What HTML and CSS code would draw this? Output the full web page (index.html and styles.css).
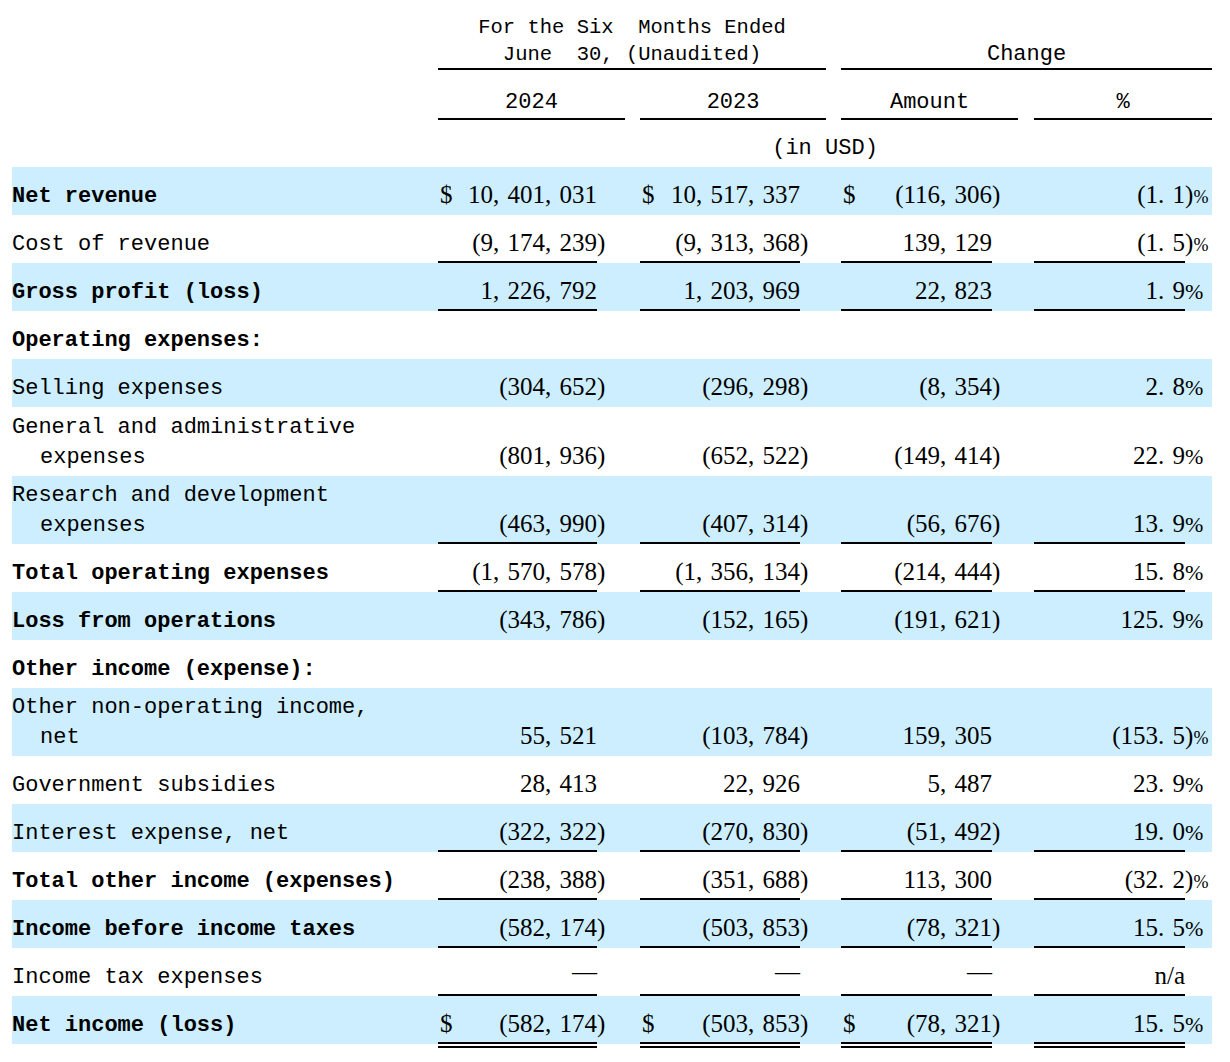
FILE: index.html
```html
<!DOCTYPE html>
<html lang="en">
<head>
<meta charset="utf-8">
<title>Six Months Ended June 30 - Results of Operations</title>
<link rel="stylesheet" href="styles.css">
</head>
<body>
<div class="wrap">
<table class="fin">
  <colgroup>
    <col class="c-lbl"><col class="c-va"><col class="c-sa"><col class="c-g1">
    <col class="c-vb"><col class="c-sb"><col class="c-g2">
    <col class="c-vc"><col class="c-sc"><col class="c-g3">
    <col class="c-vd"><col class="c-sd">
  </colgroup>
  <thead>
    <tr class="h1">
      <th class="hl"></th>
      <th class="hc hu hsm" colspan="5">For the Six&nbsp; Months Ended<br>June&nbsp; 30, (Unaudited)</th>
      <th></th>
      <th class="hc hu" colspan="5">Change</th>
    </tr>
    <tr class="h2">
      <th class="hl"></th>
      <th class="hc hu" colspan="2">2024</th>
      <th></th>
      <th class="hc hu" colspan="2">2023</th>
      <th></th>
      <th class="hc hu" colspan="2">Amount</th>
      <th></th>
      <th class="hc hu" colspan="2">%</th>
    </tr>
    <tr class="h3">
      <th class="hl"></th>
      <th class="hc" colspan="11">(in USD)</th>
    </tr>
  </thead>
  <tbody>
    <tr class="blue">
      <td class="lbl b">Net revenue</td>
      <td class="v"><span class="cur">$</span>10, 401, 031</td><td class="s"></td><td></td>
      <td class="v"><span class="cur">$</span>10, 517, 337</td><td class="s"></td><td></td>
      <td class="v"><span class="cur">$</span>(116, 306</td><td class="s">)</td><td></td>
      <td class="v">(1. 1</td><td class="s">)<span class="pc sm">%</span></td>
    </tr>
    <tr>
      <td class="lbl">Cost of revenue</td>
      <td class="v u">(9, 174, 239</td><td class="s">)</td><td></td>
      <td class="v u">(9, 313, 368</td><td class="s">)</td><td></td>
      <td class="v u">139, 129</td><td class="s"></td><td></td>
      <td class="v u">(1. 5</td><td class="s">)<span class="pc sm">%</span></td>
    </tr>
    <tr class="blue">
      <td class="lbl b">Gross profit (loss)</td>
      <td class="v u">1, 226, 792</td><td class="s"></td><td></td>
      <td class="v u">1, 203, 969</td><td class="s"></td><td></td>
      <td class="v u">22, 823</td><td class="s"></td><td></td>
      <td class="v u">1. 9</td><td class="s"><span class="pc">%</span></td>
    </tr>
    <tr>
      <td class="lbl b">Operating expenses:</td>
      <td></td><td></td><td></td><td></td><td></td><td></td><td></td><td></td><td></td><td></td><td></td>
    </tr>
    <tr class="blue">
      <td class="lbl">Selling expenses</td>
      <td class="v">(304, 652</td><td class="s">)</td><td></td>
      <td class="v">(296, 298</td><td class="s">)</td><td></td>
      <td class="v">(8, 354</td><td class="s">)</td><td></td>
      <td class="v">2. 8</td><td class="s"><span class="pc">%</span></td>
    </tr>
    <tr class="tall">
      <td class="lbl">General and administrative<br>expenses</td>
      <td class="v">(801, 936</td><td class="s">)</td><td></td>
      <td class="v">(652, 522</td><td class="s">)</td><td></td>
      <td class="v">(149, 414</td><td class="s">)</td><td></td>
      <td class="v">22. 9</td><td class="s"><span class="pc">%</span></td>
    </tr>
    <tr class="blue">
      <td class="lbl">Research and development<br>expenses</td>
      <td class="v u">(463, 990</td><td class="s">)</td><td></td>
      <td class="v u">(407, 314</td><td class="s">)</td><td></td>
      <td class="v u">(56, 676</td><td class="s">)</td><td></td>
      <td class="v u">13. 9</td><td class="s"><span class="pc">%</span></td>
    </tr>
    <tr>
      <td class="lbl b">Total operating expenses</td>
      <td class="v u">(1, 570, 578</td><td class="s">)</td><td></td>
      <td class="v u">(1, 356, 134</td><td class="s">)</td><td></td>
      <td class="v u">(214, 444</td><td class="s">)</td><td></td>
      <td class="v u">15. 8</td><td class="s"><span class="pc">%</span></td>
    </tr>
    <tr class="blue">
      <td class="lbl b">Loss from operations</td>
      <td class="v">(343, 786</td><td class="s">)</td><td></td>
      <td class="v">(152, 165</td><td class="s">)</td><td></td>
      <td class="v">(191, 621</td><td class="s">)</td><td></td>
      <td class="v">125. 9</td><td class="s"><span class="pc">%</span></td>
    </tr>
    <tr>
      <td class="lbl b">Other income (expense):</td>
      <td></td><td></td><td></td><td></td><td></td><td></td><td></td><td></td><td></td><td></td><td></td>
    </tr>
    <tr class="blue">
      <td class="lbl">Other non-operating income,<br>net</td>
      <td class="v">55, 521</td><td class="s"></td><td></td>
      <td class="v">(103, 784</td><td class="s">)</td><td></td>
      <td class="v">159, 305</td><td class="s"></td><td></td>
      <td class="v">(153. 5</td><td class="s">)<span class="pc sm">%</span></td>
    </tr>
    <tr>
      <td class="lbl">Government subsidies</td>
      <td class="v">28, 413</td><td class="s"></td><td></td>
      <td class="v">22, 926</td><td class="s"></td><td></td>
      <td class="v">5, 487</td><td class="s"></td><td></td>
      <td class="v">23. 9</td><td class="s"><span class="pc">%</span></td>
    </tr>
    <tr class="blue">
      <td class="lbl">Interest expense, net</td>
      <td class="v u">(322, 322</td><td class="s">)</td><td></td>
      <td class="v u">(270, 830</td><td class="s">)</td><td></td>
      <td class="v u">(51, 492</td><td class="s">)</td><td></td>
      <td class="v u">19. 0</td><td class="s"><span class="pc">%</span></td>
    </tr>
    <tr>
      <td class="lbl b">Total other income (expenses)</td>
      <td class="v u">(238, 388</td><td class="s">)</td><td></td>
      <td class="v u">(351, 688</td><td class="s">)</td><td></td>
      <td class="v u">113, 300</td><td class="s"></td><td></td>
      <td class="v u">(32. 2</td><td class="s">)<span class="pc sm">%</span></td>
    </tr>
    <tr class="blue">
      <td class="lbl b">Income before income taxes</td>
      <td class="v u">(582, 174</td><td class="s">)</td><td></td>
      <td class="v u">(503, 853</td><td class="s">)</td><td></td>
      <td class="v u">(78, 321</td><td class="s">)</td><td></td>
      <td class="v u">15. 5</td><td class="s"><span class="pc">%</span></td>
    </tr>
    <tr>
      <td class="lbl">Income tax expenses</td>
      <td class="v u"><span class="dash">—</span></td><td class="s"></td><td></td>
      <td class="v u"><span class="dash">—</span></td><td class="s"></td><td></td>
      <td class="v u"><span class="dash">—</span></td><td class="s"></td><td></td>
      <td class="v u">n/a</td><td class="s"></td>
    </tr>
    <tr class="blue">
      <td class="lbl b">Net income (loss)</td>
      <td class="v uu"><span class="cur">$</span>(582, 174</td><td class="s">)</td><td></td>
      <td class="v uu"><span class="cur">$</span>(503, 853</td><td class="s">)</td><td></td>
      <td class="v uu"><span class="cur">$</span>(78, 321</td><td class="s">)</td><td></td>
      <td class="v uu">15. 5</td><td class="s"><span class="pc">%</span></td>
    </tr>
  </tbody>
</table>
</div>
</body>
</html>
```
FILE: styles.css
```css
html, body {
  margin: 0;
  padding: 0;
  background: #ffffff;
}

.wrap {
  padding-left: 12px;
  padding-bottom: 10px;
}

.fin {
  width: 1200px;
  table-layout: fixed;
  border-collapse: separate;
  border-spacing: 0;
  color: #000;
  font-family: "Liberation Mono", "DejaVu Sans Mono", monospace;
  font-size: 22px;
}

.c-lbl { width: 426px; }
.c-va { width: 159px; }
.c-sa { width: 28px; }
.c-g1 { width: 15px; }
.c-vb { width: 160px; }
.c-sb { width: 26px; }
.c-g2 { width: 15px; }
.c-vc { width: 151px; }
.c-sc { width: 26px; }
.c-g3 { width: 16px; }
.c-vd { width: 151px; }
.c-sd { width: 27px; }

.fin th,
.fin td {
  padding: 0;
  vertical-align: bottom;
  white-space: nowrap;
  overflow: visible;
}

.fin th {
  font-weight: normal;
}

/* header rows */
.h1 { height: 70px; }
.h1 th {
  line-height: 27px;
  padding-top: 12px;
  padding-bottom: 2px;
}
.h1 th.hsm {
  font-size: 20.5px;
}
.h2 { height: 50px; }
.h2 th {
  line-height: 30px;
  padding-bottom: 2px;
}
.h3 { height: 47px; }
.h3 th {
  line-height: 30px;
  padding-bottom: 3px;
}
.hc { text-align: center; }
.hu { border-bottom: 2px solid #000; }
.h1 .hu, .h2 .hu { padding-bottom: 0; }

/* body rows */
.fin tbody tr { height: 48px; }
.fin tbody tr.tall { height: 69px; }
.blue { background: #cceeff; }

.lbl {
  line-height: 30px;
  padding: 5px 0 3px 28px !important;
  text-indent: -28px;
  text-align: left;
  white-space: normal !important;
}
.b { font-weight: bold; }

.v,
.s {
  font-family: "Liberation Serif", "DejaVu Serif", serif;
  font-size: 25px;
  line-height: 30px;
  word-spacing: 2px;
  padding-bottom: 5px !important;
}
.v { text-align: right; }
.s { text-align: left; }

.cur {
  float: left;
  padding-left: 2px;
}

.pc {
  font-family: "Liberation Serif", "DejaVu Serif", serif;
  font-size: 22px;
  line-height: 0;
}
.pc.sm {
  font-size: 18px;
}

.dash {
  position: relative;
  top: -4px;
}

.u {
  border-bottom: 2px solid #000;
  padding-bottom: 3px !important;
}
.uu {
  position: relative;
  border-bottom: 2px solid #000;
  padding-bottom: 3px !important;
}
.uu::after {
  content: "";
  position: absolute;
  left: 0;
  right: 0;
  bottom: -6px;
  height: 2px;
  background: #000;
}
```
